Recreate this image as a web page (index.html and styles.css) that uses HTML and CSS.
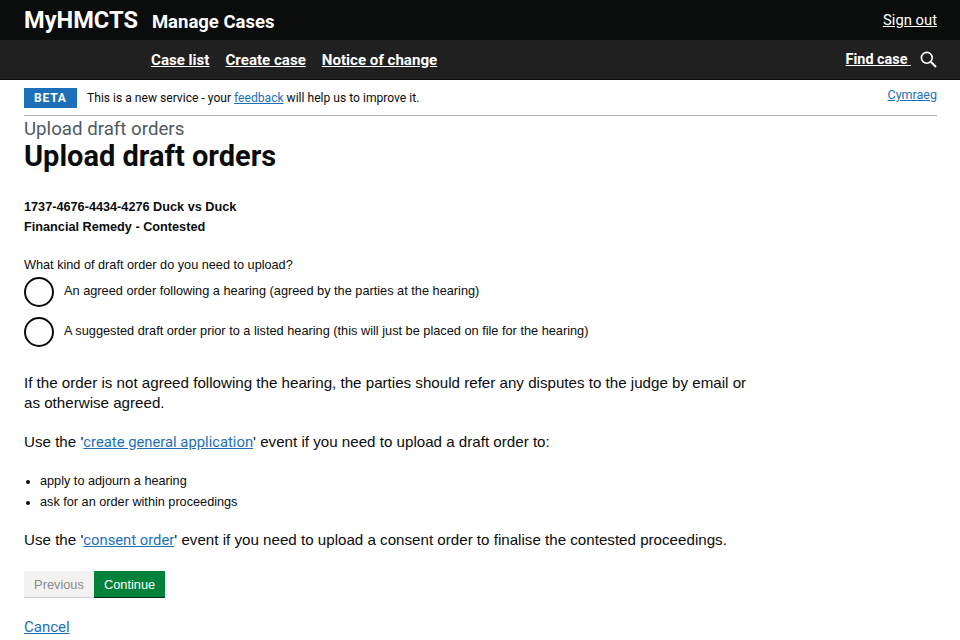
FILE: index.html
```html
<!DOCTYPE html>
<html lang="en">
<head>
    <meta charset="UTF-8">
    <meta name="viewport" content="width=device-width, initial-scale=1.0">
    <title>Upload draft orders</title>
    <link rel="stylesheet" href="styles.css">
</head>
<body>
    <header class="top-bar">
        <div class="brand">
            <span class="brand-name">MyHMCTS</span>
            <span class="brand-service">Manage Cases</span>
        </div>
        <a class="sign-out" href="#">Sign out</a>
    </header>
    <nav class="nav-bar">
        <div class="nav-links">
            <a href="#">Case list</a>
            <a href="#">Create case</a>
            <a href="#">Notice of change</a>
        </div>
        <div class="find-case">
            <a href="#">Find case&nbsp;</a>
            <svg class="search-icon" width="17" height="17" viewBox="0 0 17 17" fill="none" stroke="#fff" stroke-width="1.6">
                <circle cx="6.8" cy="6.8" r="5.4"/>
                <path d="M10.8 10.8 L16 16" stroke-width="2"/>
            </svg>
        </div>
    </nav>
    <main class="container">
        <div class="phase-banner">
            <div class="phase-left">
                <strong class="phase-tag">BETA</strong>
                <span class="phase-text">This is a new service - your <a href="#">feedback</a> will help us to improve it.</span>
            </div>
            <a class="lang-link" href="#">Cymraeg</a>
        </div>
        <div class="caption">Upload draft orders</div>
        <h1>Upload draft orders</h1>
        <div class="case-info">
            <div>1737-4676-4434-4276 Duck vs Duck</div>
            <div>Financial Remedy - Contested</div>
        </div>
        <div class="question">What kind of draft order do you need to upload?</div>
        <div class="radio-row">
            <span class="radio"></span>
            <label>An agreed order following a hearing (agreed by the parties at the hearing)</label>
        </div>
        <div class="radio-row">
            <span class="radio"></span>
            <label>A suggested draft order prior to a listed hearing (this will just be placed on file for the hearing)</label>
        </div>
        <div class="guidance">
            <p class="first">If the order is not agreed following the hearing, the parties should refer any disputes to the judge by email or as otherwise agreed.</p>
            <p>Use the '<a href="#">create general application</a>' event if you need to upload a draft order to:</p>
            <ul>
                <li>apply to adjourn a hearing</li>
                <li>ask for an order within proceedings</li>
            </ul>
            <p>Use the '<a href="#">consent order</a>' event if you need to upload a consent order to finalise the contested proceedings.</p>
        </div>
        <div class="button-row">
            <button class="btn-previous">Previous</button>
            <button class="btn-continue">Continue</button>
        </div>
        <a class="cancel" href="#">Cancel</a>
    </main>
</body>
</html>
```

FILE: styles.css
```css
html, body {
    height: 640px;
    overflow: hidden;
}
body {
    font-family: "Liberation Sans", Arial, sans-serif;
    margin: 0;
    color: #0b0c0c;
    background: #fff;
}
a {
    color: #1d70b8;
}
.top-bar {
    display: flex;
    justify-content: space-between;
    align-items: center;
    height: 40px;
    padding: 0 23px 0 24px;
    background-color: #0b0c0c;
    color: #fff;
}
.brand {
    display: flex;
    align-items: baseline;
    padding-bottom: 1px;
    font-family: Roboto, sans-serif;
    font-weight: 700;
}
.brand-name {
    font-size: 23.6px;
    margin-right: 14px;
}
.brand-service {
    font-size: 18.5px;
}
.sign-out {
    font-family: Roboto, sans-serif;
    font-size: 14.8px;
    color: #fff;
}
.nav-bar {
    display: flex;
    justify-content: space-between;
    align-items: center;
    height: 39px;
    padding: 0 23px 0 151px;
    background-color: #202020;
    border-bottom: 1px solid #0b0c0c;
    font-family: Roboto, sans-serif;
    font-size: 15.1px;
    font-weight: 700;
}
.nav-bar a {
    color: #fff;
}
.nav-links {
    display: flex;
    gap: 16px;
}
.find-case {
    display: flex;
    align-items: center;
    gap: 9px;
    font-size: 14.4px;
}
.container {
    padding: 0 23px 0 24px;
}
.phase-banner {
    display: flex;
    justify-content: space-between;
    align-items: flex-start;
    height: 36px;
    padding-top: 8px;
    box-sizing: border-box;
    border-bottom: 1px solid #b1b4b6;
    font-family: Roboto, sans-serif;
    font-size: 12.1px;
}
.phase-left {
    display: flex;
    align-items: center;
    gap: 10px;
}
.phase-tag {
    background-color: #1d70b8;
    color: #fff;
    font-size: 12px;
    letter-spacing: 0.8px;
    padding: 2px 10px;
    height: 20px;
    box-sizing: border-box;
    width: 53px;
    line-height: 16px;
}
.lang-link {
    margin-top: -1px;
    font-size: 12.5px;
}
.caption {
    padding-top: 1px;
    font-family: Roboto, sans-serif;
    font-size: 18.7px;
    line-height: 25px;
    color: #505a5f;
}
h1 {
    font-family: Roboto, sans-serif;
    font-size: 29px;
    line-height: 30px;
    font-weight: 700;
    margin: -1px 0 0;
}
.case-info {
    margin-top: 26px;
    font-size: 12.7px;
    font-weight: 700;
    line-height: 20px;
}
.question {
    margin-top: 20px;
    font-size: 12.7px;
    line-height: 16px;
}
.radio-row {
    display: flex;
    align-items: center;
    gap: 10px;
    height: 30px;
    margin-bottom: 10px;
    font-size: 12.75px;
}
.radio-row label {
    margin-bottom: 4px;
}
.question + .radio-row {
    margin-top: 4px;
}
.radio {
    width: 26px;
    height: 26px;
    border: 2px solid #0b0c0c;
    border-radius: 50%;
    flex: none;
}
.guidance {
    width: 728px;
    font-size: 15.15px;
    line-height: 20px;
}
.guidance p {
    margin: 0 0 20px;
}
.guidance .first {
    margin-top: 26px;
    margin-bottom: 19px;
}
.guidance a {
    font-family: Roboto, sans-serif;
    font-size: 14.8px;
}
.guidance ul {
    margin: -1px 0 17px;
    padding-left: 16px;
    font-size: 12.7px;
    line-height: 21px;
}
.button-row {
    display: flex;
    margin-top: 21px;
}
button {
    font-family: "Liberation Sans", Arial, sans-serif;
    font-size: 12.8px;
    height: 26px;
    border: none;
    padding: 0 10px;
}
.btn-previous {
    width: 70px;
    background-color: #f3f2f1;
    color: #8a8a8a;
    box-shadow: 0 1px 0 #d0d0d0;
}
.btn-continue {
    width: 71px;
    background-color: #00823b;
    color: #fff;
    box-shadow: 0 1px 0 #002d18;
}
.cancel {
    display: inline-block;
    margin-top: 21px;
    font-family: Roboto, sans-serif;
    font-size: 15px;
}
```
